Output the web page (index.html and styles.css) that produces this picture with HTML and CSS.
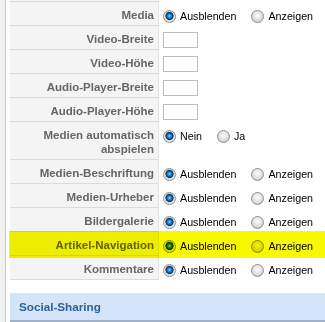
FILE: index.html
```html
<!DOCTYPE html>
<html lang="de">
<head>
<meta charset="utf-8">
<title>Parameter</title>
<link rel="stylesheet" href="styles.css">
</head>
<body>
<div class="page">
  <div class="gutter"></div>
  <div class="main">
    <div class="params">
      <div class="row stub"><div class="key"></div><div class="val"></div></div>
      <div class="row">
        <div class="key">Media</div>
        <div class="val">
          <label class="opt"><input class="radio" type="radio" name="media" checked>Ausblenden</label>
          <label class="opt"><input class="radio" type="radio" name="media">Anzeigen</label>
        </div>
      </div>
      <div class="row">
        <div class="key">Video-Breite</div>
        <div class="val"><input class="txt" type="text"></div>
      </div>
      <div class="row">
        <div class="key">Video-Höhe</div>
        <div class="val"><input class="txt" type="text"></div>
      </div>
      <div class="row">
        <div class="key">Audio-Player-Breite</div>
        <div class="val"><input class="txt" type="text"></div>
      </div>
      <div class="row">
        <div class="key">Audio-Player-Höhe</div>
        <div class="val"><input class="txt" type="text"></div>
      </div>
      <div class="row">
        <div class="key">Medien automatisch<br>abspielen</div>
        <div class="val">
          <label class="opt"><input class="radio" type="radio" name="auto" checked>Nein</label>
          <label class="opt"><input class="radio" type="radio" name="auto">Ja</label>
        </div>
      </div>
      <div class="row">
        <div class="key">Medien-Beschriftung</div>
        <div class="val">
          <label class="opt"><input class="radio" type="radio" name="besch" checked>Ausblenden</label>
          <label class="opt"><input class="radio" type="radio" name="besch">Anzeigen</label>
        </div>
      </div>
      <div class="row">
        <div class="key">Medien-Urheber</div>
        <div class="val">
          <label class="opt"><input class="radio" type="radio" name="urheber" checked>Ausblenden</label>
          <label class="opt"><input class="radio" type="radio" name="urheber">Anzeigen</label>
        </div>
      </div>
      <div class="row">
        <div class="key">Bildergalerie</div>
        <div class="val">
          <label class="opt"><input class="radio" type="radio" name="galerie" checked>Ausblenden</label>
          <label class="opt"><input class="radio" type="radio" name="galerie">Anzeigen</label>
        </div>
      </div>
      <div class="row hl">
        <div class="key">Artikel-Navigation</div>
        <div class="val">
          <label class="opt"><input class="radio" type="radio" name="nav" checked>Ausblenden</label>
          <label class="opt"><input class="radio" type="radio" name="nav">Anzeigen</label>
        </div>
      </div>
      <div class="row">
        <div class="key">Kommentare</div>
        <div class="val">
          <label class="opt"><input class="radio" type="radio" name="komm" checked>Ausblenden</label>
          <label class="opt"><input class="radio" type="radio" name="komm">Anzeigen</label>
        </div>
      </div>
    </div>
    <div class="section-head">Social-Sharing</div>
  </div>
</div>
</body>
</html>
```

FILE: styles.css
```css
html, body {
  margin: 0;
  padding: 0;
  background: #ffffff;
}

body {
  font-family: "Liberation Sans", Arial, Helvetica, sans-serif;
  overflow: hidden;
}

.page {
  display: flex;
  min-height: 322px;
}

.gutter {
  width: 5px;
  flex: none;
  background: #f2f2f2;
  border-right: 1px solid #c9c9c9;
}

.main {
  flex: 1;
  padding-left: 4px;
}

.row {
  display: grid;
  grid-template-columns: 149px 1fr;
}

.key {
  background: #f4f4f4;
  border-right: 1px solid #e4e4e4;
  border-bottom: 1px solid #dcdcdc;
  padding: 6px 4px 3px 4px;
  line-height: 14px;
  font-size: 11.5px;
  font-weight: bold;
  color: #666666;
  text-align: right;
}

.stub .key {
  height: 1px;
  padding: 0;
  box-sizing: content-box;
}

.stub .val {
  padding: 0;
}

.val {
  display: flex;
  align-items: flex-start;
  gap: 15px;
  padding: 6px 0 0 4px;
}

.opt {
  display: inline-flex;
  align-items: center;
  height: 16px;
  font-size: 10.7px;
  color: #000000;
}

.radio {
  -webkit-appearance: none;
  appearance: none;
  box-sizing: border-box;
  width: 13px;
  height: 13px;
  margin: 1px 4px 0 0;
  border-radius: 50%;
  border: 1px solid #8e8f8f;
  background: radial-gradient(circle at 50% 40%, #ffffff 0, #f0f0f0 2px, #d9d9d9 5.5px, #cfcfcf 6px);
}

.radio:checked {
  background: radial-gradient(circle at 50% 45%, #a8dcff 0, #3a93dc 1.3px, #1462ad 2.6px, #0b3a70 3.4px, #0b3a70 3.8px, #c9c9c9 4.3px, #f1f1f1 5.2px, #d8d8d8 6px);
}

.txt {
  box-sizing: border-box;
  width: 35px;
  height: 16px;
  margin: 0;
  padding: 0;
  border: 1px solid #bdbdbd;
  background: #ffffff;
}

.hl {
  position: relative;
}

.hl::after {
  content: "";
  position: absolute;
  left: -1px;
  right: 0;
  top: -1px;
  bottom: -2px;
  background: #f8f800;
  mix-blend-mode: multiply;
  pointer-events: none;
}

.section-head {
  margin-top: 13px;
  height: 27px;
  line-height: 27px;
  padding-left: 9px;
  background: #d4e5f9;
  border-bottom: 2px solid #9fb2c8;
  font-size: 11.7px;
  font-weight: bold;
  color: #335f94;
}
```
